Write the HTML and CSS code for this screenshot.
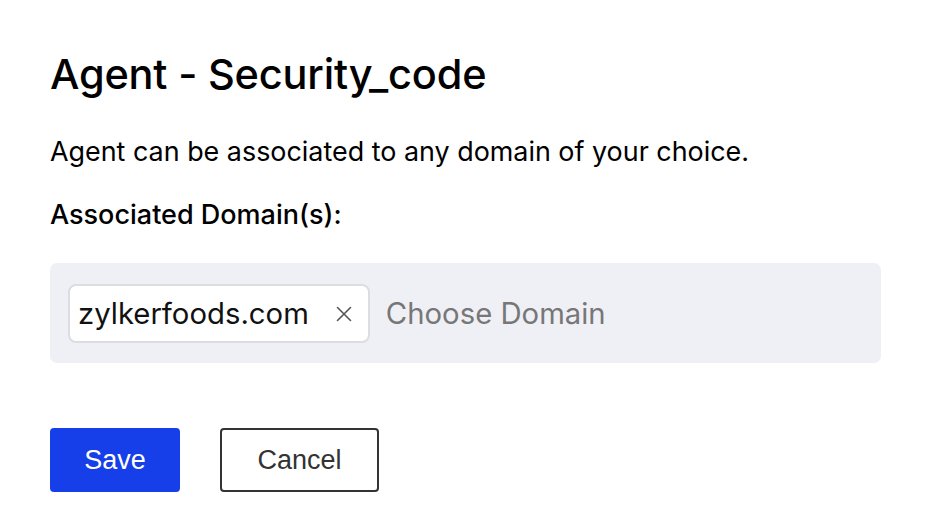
FILE: index.html
```html
<!DOCTYPE html>
<html>
<head>
<meta charset="utf-8">
<link rel="stylesheet" href="styles.css">
</head>
<body>
<div class="dialog">
  <h1 class="title">Agent - Security_code</h1>
  <p class="desc">Agent can be associated to any domain of your choice.</p>
  <div class="label">Associated Domain(s):</div>
  <div class="domain-box">
    <span class="chip">zylkerfoods.com<svg class="chip-x" width="16" height="16" viewBox="0 0 16 16"><path d="M1.5 1.5 L14.5 14.5 M14.5 1.5 L1.5 14.5" stroke="#555" stroke-width="1.6" fill="none" stroke-linecap="round"/></svg></span>
    <span class="placeholder">Choose Domain</span>
  </div>
  <div class="actions">
    <button class="btn btn-primary">Save</button>
    <button class="btn btn-secondary">Cancel</button>
  </div>
</div>
</body>
</html>
```
FILE: styles.css
```css
html, body {
  margin: 0;
  padding: 0;
  background: #ffffff;
}
body {
  font-family: Inter, "Noto Sans", sans-serif;
  color: #000;
}
.dialog {
  padding: 50px 49px 0 50px;
  display: flex;
  flex-direction: column;
}
.title {
  margin: 0;
  font-size: 41.5px;
  font-weight: 500;
  line-height: 48px;
  letter-spacing: -0.2px;
}
.desc {
  margin: 38px 0 0 0;
  font-size: 26.9px;
  line-height: 30px;
  font-weight: 400;
}
.label {
  margin-top: 34px;
  font-size: 27px;
  line-height: 30px;
  font-weight: 500;
}
.domain-box {
  margin-top: 33px;
  height: 100px;
  box-sizing: border-box;
  background: #eff0f5;
  border-radius: 7px;
  display: flex;
  align-items: center;
  padding: 0 18px;
  gap: 16px;
}
.chip {
  display: inline-flex;
  align-items: center;
  height: 59px;
  box-sizing: border-box;
  background: #fff;
  border: 2px solid #dcdde2;
  border-radius: 8px;
  padding: 0 16px 0 8px;
  font-size: 29.3px;
  color: #111;
}
.chip-x {
  margin-left: 27px;
  margin-top: 2px;
}
.placeholder {
  font-size: 29.3px;
  color: #777;
}
.actions {
  margin-top: 65px;
  display: flex;
  gap: 40px;
}
.btn {
  height: 64px;
  font-family: "Liberation Sans", Arial, sans-serif;
  font-size: 27px;
  border-radius: 4px;
  cursor: pointer;
}
.btn-primary {
  width: 130px;
  background: #163fe9;
  color: #fff;
  border: none;
}
.btn-secondary {
  width: 159px;
  background: #fff;
  color: #333;
  border: 2px solid #333;
}
```
